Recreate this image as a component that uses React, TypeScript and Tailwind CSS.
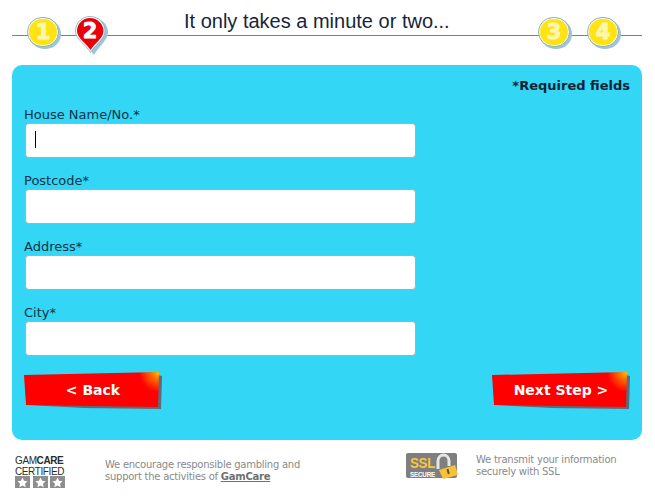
const sans = "font-['DejaVu_Sans',Verdana,sans-serif]";

const fields = ["House Name/No.*", "Postcode*", "Address*", "City*"];

const StepCircle = ({ n }: { n: number }) => (
  <div className="relative w-[32px] h-[30px]">
    <div className="absolute left-[2px] top-[2px] w-[32px] h-[30px] rounded-full bg-[#9fc4dc]" />
    <div className="absolute inset-0 rounded-full bg-[#ffe312] border border-[#8fb4c8] shadow-[inset_0_0_0_1px_#ffffff] flex items-center justify-center text-[#fff6b0] font-black text-[21px] leading-none [-webkit-text-stroke:1px_#fff6b0] font-['DejaVu_Sans',sans-serif]">
      {n}
    </div>
  </div>
);

const StepPin = () => (
  <svg width="38" height="40" viewBox="0 0 38 40">
    <path d="M19 3c8 0 15 6 15 14 0 8-9 14-14 23C15 32 4 26 4 17 4 9 11 3 19 3z" fill="#9cc5dc" />
    <path d="M16 1.500c8.500 0 15 6.500 15 14.500 0 8-9 13-14.500 21.500C11 29 1.500 24 1.500 16 1.500 8 8 1.500 16 1.500z" fill="#ffffff" stroke="#7fa8bc" strokeWidth="0.8" />
    <path d="M16 3c7.500 0 13.500 6 13.500 13 0 7-8.500 12-13 19C12 28 3 23 3 16 3 9 8.500 3 16 3z" fill="#e8000b" />
    <text x="16" y="23" textAnchor="middle" fontFamily="DejaVu Sans, sans-serif" fontWeight="900" fontSize="21" fill="#ffffff" stroke="#ffffff" strokeWidth="0.8">2</text>
  </svg>
);

const RedButton = ({ label, id }: { label: string; id: string }) => (
  <button className="relative w-[138px] h-[38px] flex items-center justify-center">
    <svg className="absolute inset-0" width="138" height="38" viewBox="0 0 138 38">
      <defs>
        <radialGradient id={id} gradientUnits="userSpaceOnUse" cx="135" cy="0" r="20">
          <stop offset="0" stopColor="#ffc400" />
          <stop offset="0.4" stopColor="#ff6a00" />
          <stop offset="1" stopColor="#ff0000" />
        </radialGradient>
      </defs>
      <polygon points="4,33 134,3 138,4 137,37 60,36" fill="#5d6b78" />
      <polygon points="0,3 135,0 134,35 2,33" fill={`url(#${id})`} />
    </svg>
    <span className={`relative -mt-[2px] text-white font-bold text-[14px] ${sans}`}>{label}</span>
  </button>
);

const App = () => {
  return (
    <div className={`w-[655px] h-[499px] bg-white overflow-hidden ${sans}`}>
      <header className="relative h-[65px] ml-[12px] w-[630px]">
        <div className="absolute left-0 right-0 top-[35px] h-px bg-[#21a3c4]" />
        <div className="relative flex items-start pt-[17px] pl-[15px] pr-[23px]">
          <StepCircle n={1} />
          <div className="ml-[15px] -mt-[2px]">
            <StepPin />
          </div>
          <h1 className="ml-[72px] -mt-[8px] flex-1 text-[20px] leading-[24px] text-[#14273a] font-['Liberation_Sans',Arial,sans-serif]">
            It only takes a minute or two...
          </h1>
          <div className="flex gap-[17px]">
            <StepCircle n={3} />
            <StepCircle n={4} />
          </div>
        </div>
      </header>

      <main className="ml-[12px] w-[630px] h-[375px] rounded-[10px] bg-[#33d6f5] px-[12px] pt-[13px]">
        <p className="text-right text-[13px] leading-[16px] font-bold text-[#0c2236]">*Required fields</p>
        <form className="mt-[13px] flex flex-col gap-[15px]">
          {fields.map((field, i) => (
            <div key={field}>
              <label className="block text-[13px] leading-[16px] h-[17px] text-[#0f3347]">{field}</label>
              <div className="relative ml-[1px] w-[391px] h-[35px] -mt-px">
                <input
                  readOnly
                  className="w-full h-full bg-white rounded-[4px] border border-[#9fb1bb] outline-none"
                />
                {i === 0 && <div className="absolute left-[10px] top-[8px] w-px h-[17px] bg-black" />}
              </div>
            </div>
          ))}
        </form>
        <div className="mt-[16px] flex justify-between">
          <RedButton label="< Back" id="backCorner" />
          <RedButton label="Next Step >" id="nextCorner" />
        </div>
      </main>

      <footer className="flex items-start pt-[15px] pl-[15px] text-[10px] tracking-[-0.25px] leading-[12px] text-[#8a8a8a]">
        <div className="w-[50px]">
          <div className="text-[10px] leading-[11px] tracking-[-0.4px] text-[#2b2b2b] font-['Liberation_Sans',Arial,sans-serif]">
            GAM<span className="font-bold">CARE</span>
            <br />
            CERTIFIED
          </div>
          <div className="-mt-px flex justify-between">
            {[0, 1, 2].map((s) => (
              <div key={s} className="w-[15px] h-[12px] bg-[#8e8e8e] flex items-center justify-center">
                <svg width="11" height="11" viewBox="0 0 24 24" fill="#ffffff">
                  <path d="M12 1l3.400 7.300 7.600.9-5.600 5.300 1.500 8L12 18.500 5.100 22.500l1.500-8L1 9.200l7.600-.9z" />
                </svg>
              </div>
            ))}
          </div>
        </div>
        <p className="ml-[40px] mt-[4px] w-[240px]">
          We encourage responsible gambling and
          <br />
          support the activities of <span className="font-bold underline text-[#707070]">GamCare</span>
        </p>
        <svg className="ml-[61px] -mt-[2px]" width="54" height="30" viewBox="0 0 54 30">
          <rect x="0" y="0" width="51" height="25" rx="2" fill="#7f7f7f" />
          <text x="4" y="14.500" textLength="25" lengthAdjust="spacingAndGlyphs" fontFamily="Liberation Sans, sans-serif" fontWeight="700" fontSize="14" fill="#f7c83c">SSL</text>
          <text x="4" y="24" textLength="25" lengthAdjust="spacingAndGlyphs" fontFamily="Liberation Sans, sans-serif" fontWeight="700" fontSize="8" fill="#ffffff">SECURE</text>
          <path d="M32 16V8c0-4 3-6 5.500-6s5.500 2 5.500 6v5" fill="none" stroke="#e6e6e6" strokeWidth="3" />
          <polygon points="33,17 49,12 52,22 37,26" fill="#f7c23a" />
          <rect x="41" y="16" width="2" height="5" fill="#6b5310" transform="rotate(-15 42 18)" />
        </svg>
        <p className="ml-[16px] -mt-[1px] w-[170px]">
          We transmit your information
          <br />
          securely with SSL
        </p>
      </footer>
    </div>
  );
};

export default App;
